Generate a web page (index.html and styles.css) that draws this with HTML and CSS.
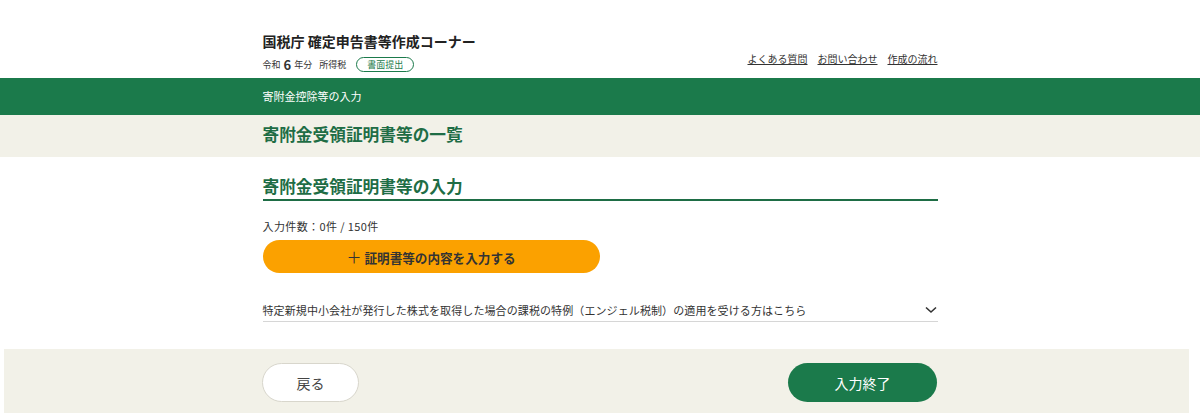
FILE: index.html
```html
<!DOCTYPE html>
<html lang="ja">
<head>
    <meta charset="UTF-8">
    <title>寄附金受領証明書等の一覧</title>
    <link rel="stylesheet" href="styles.css">
</head>
<body>
    <div id="header">
        <div class="inner">
            <div class="site">
                <p class="site-title">国税庁 確定申告書等作成コーナー</p>
                <p class="site-sub">令和 <b>6</b> 年分<span class="tax">所得税</span><span class="badge">書面提出</span></p>
            </div>
            <ul class="links">
                <li><a href="#">よくある質問</a></li>
                <li><a href="#">お問い合わせ</a></li>
                <li><a href="#">作成の流れ</a></li>
            </ul>
        </div>
    </div>

    <div id="step">
        <div class="inner">寄附金控除等の入力</div>
    </div>

    <div id="pagehead">
        <div class="inner"><h1>寄附金受領証明書等の一覧</h1></div>
    </div>

    <div id="main">
        <div class="inner">
            <h2>寄附金受領証明書等の入力</h2>
            <p class="count">入力件数：0件 / 150件</p>
            <button class="btn-add"><span class="plus">＋</span>証明書等の内容を入力する</button>
            <div class="accordion">
                <span>特定新規中小会社が発行した株式を取得した場合の課税の特例（エンジェル税制）の適用を受ける方はこちら</span>
                <svg width="12" height="8" viewBox="0 0 12 8"><path d="M1 1.5 L6 6 L11 1.5" fill="none" stroke="#333" stroke-width="1.6"/></svg>
            </div>
        </div>
    </div>

    <div id="footer">
        <div class="inner">
            <button class="btn-back">戻る</button>
            <button class="btn-done">入力終了</button>
        </div>
    </div>
</body>
</html>
```

FILE: styles.css
```css
*{
    margin: 0;
    padding: 0;
}
ul, ol{
    list-style: none;
}
a{
    text-decoration: none;
    color: #333333;
}
body{
    font-family: "Noto Sans CJK JP", "Noto Sans", sans-serif;
    color: #333333;
    background: #ffffff;
}
.inner{
    width: 675px;
    margin: 0 auto;
}
#header{
    height: 78px;
}
#header .inner{
    display: flex;
    justify-content: space-between;
    align-items: flex-start;
}
.site{
    padding-top: 31px;
}
.site-title{
    font-size: 14px;
    font-weight: bold;
    line-height: 20px;
    color: #222222;
}
.site-sub{
    margin-top: 6px;
    font-size: 9px;
    line-height: 14px;
    display: flex;
    align-items: center;
}
.site-sub b{
    font-size: 13px;
    margin: 0 3px;
}
.site-sub .tax{
    margin-left: 7px;
}
.badge{
    margin-left: 10px;
    border: 1px solid #1b7a4b;
    border-radius: 8px;
    padding: 0 10px;
    height: 13px;
    line-height: 13px;
    font-size: 9px;
    color: #1b7a4b;
}
.links{
    display: flex;
    gap: 10px;
    padding-top: 44px;
}
.links a{
    font-size: 10px;
    line-height: 16px;
    text-decoration: underline;
}
#step{
    background: #1b7a4b;
    height: 37px;
    line-height: 37px;
    color: #ffffff;
    font-size: 11px;
}
#pagehead{
    background: #f2f1e8;
    height: 42px;
}
#pagehead h1{
    font-size: 16.7px;
    line-height: 38px;
    color: #1e6d45;
}
#main h2{
    margin-top: 17px;
    font-size: 16.7px;
    line-height: 24px;
    color: #1e6d45;
    padding-bottom: 1px;
    border-bottom: 2px solid #1e6d45;
}
.count{
    margin-top: 17px;
    font-size: 11px;
    letter-spacing: 0.4px;
    line-height: 16px;
}
.btn-add{
    margin-top: 6px;
    width: 337px;
    height: 33px;
    border: 0;
    border-radius: 17px;
    background: #fba100;
    font-family: inherit;
    font-size: 12.6px;
    font-weight: bold;
    color: #333333;
    cursor: pointer;
}
.btn-add .plus{
    font-weight: normal;
    font-size: 15px;
    margin-right: 3px;
}
.accordion{
    margin-top: 29px;
    display: flex;
    justify-content: space-between;
    align-items: center;
    font-size: 11px;
    letter-spacing: 0.1px;
    line-height: 16px;
    padding-bottom: 3px;
    border-bottom: 1px solid #d6d6d6;
}
.accordion svg{
    margin-right: 1px;
}
#footer{
    margin: 27px 11px 0 4px;
    background: #f2f1e8;
    height: 64px;
}
#footer .inner{
    margin: 0 0 0 258px;
    display: flex;
    justify-content: space-between;
    padding-top: 14px;
}
.btn-back, .btn-done{
    height: 39px;
    border-radius: 20px;
    font-family: inherit;
    font-size: 14px;
    cursor: pointer;
}
.btn-back{
    width: 97px;
    background: #ffffff;
    border: 1px solid #d8d6cc;
    color: #444444;
}
.btn-done{
    width: 149px;
    background: #1b7a4b;
    border: 0;
    color: #ffffff;
}
```
